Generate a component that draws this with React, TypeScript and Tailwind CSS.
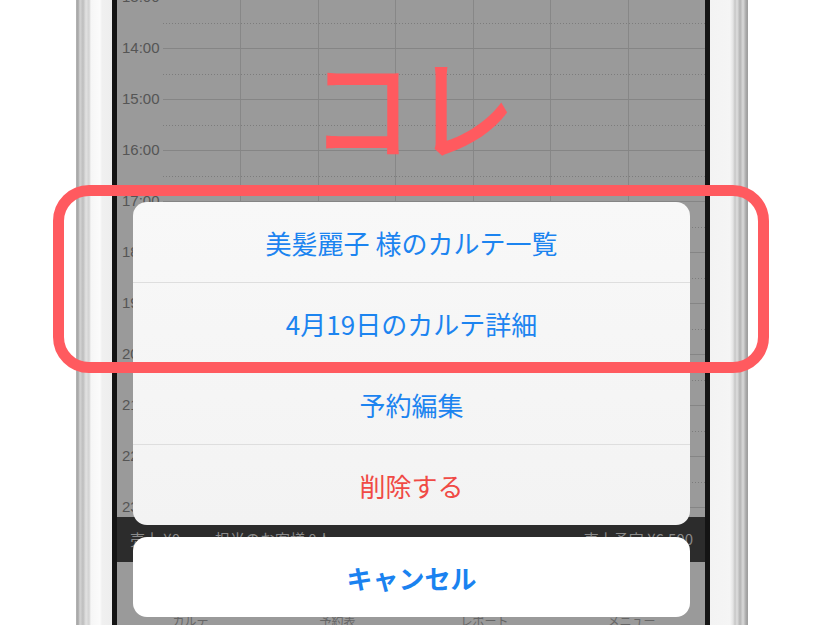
const hours = [13, 14, 15, 16, 17, 18, 19, 20, 21, 22];
const tabs = ["カルテ", "予約表", "レポート", "メニュー"];
const sheetItems = [
  { label: "美髪麗子 様のカルテ一覧", danger: false },
  { label: "4月19日のカルテ詳細", danger: false },
  { label: "予約編集", danger: false },
  { label: "削除する", danger: true },
];

const jp = "font-['Noto_Sans_CJK_JP',sans-serif]";

function HourRow({ hour, short }: { hour: number; short?: boolean }) {
  return (
    <div className={`flex ${short ? "h-[10px]" : "h-[51px]"}`}>
      <div className="flex h-0 w-[46px] items-center pl-[5px] font-['Liberation_Sans',sans-serif] text-[15px] text-[#555]">
        {hour}:00
      </div>
      <div className="grid flex-1 grid-cols-7 border-t border-[#858585]">
        {Array.from({ length: 7 }).map((_, i) => (
          <div key={i} className={i > 0 ? "border-l border-[#878787]" : ""}>
            {!short && (
              <div className="mt-[25px] h-px bg-[linear-gradient(90deg,#7c7c7c_1px,transparent_1px)] bg-[length:3px_1px]" />
            )}
          </div>
        ))}
      </div>
    </div>
  );
}

function Screen() {
  return (
    <div className="flex h-full w-[588px] flex-col overflow-hidden bg-[#9a9a9a]">
      <div className="mt-[-3px]">
        {hours.map((h) => (
          <HourRow key={h} hour={h} />
        ))}
        <HourRow hour={23} short />
      </div>
      <div className={`flex h-[45px] shrink-0 items-center bg-[#2c2c2c] pl-[13px] pr-[12px] text-[15px] text-[#8a8a8a] ${jp}`}>
        <span className="w-[85px]">売上 ¥0</span>
        <span>担当のお客様 0人</span>
        <span className="ml-auto">売上予定 ¥6,500</span>
      </div>
      <div className={`grid flex-1 grid-cols-4 pt-[53px] text-[12px] text-[#666] ${jp}`}>
        {tabs.map((t) => (
          <div key={t} className="text-center leading-none">
            {t}
          </div>
        ))}
      </div>
    </div>
  );
}

export default function App() {
  return (
    <div className="relative h-[625px] w-[830px] overflow-hidden bg-white">
      <div className="flex h-full pl-[76px]">
        <div className="flex h-full w-[672px]">
          <div className="h-full w-[36px] bg-[linear-gradient(90deg,#b4b4b4_0px,#a6a6a6_2px,#d4d4d4_4px,#bdbdbd_7px,#e2e2e2_10px,#d2d2d2_13px,#f6f6f6_15px,#fbfbfb_24px,#f0f0f0_26px,#eeeeee_36px)]" />
          <div className="h-full w-[5px] bg-[#141414]" />
          <Screen />
          <div className="h-full w-[5px] bg-[#141414]" />
          <div className="h-full w-[38px] bg-[linear-gradient(90deg,#f3f3f3_0px,#f5f5f5_20px,#e4e4e4_23px,#c6c6c6_25px,#dedede_27px,#b3b3b3_30px,#d9d9d9_33px,#a9a9a9_36px,#9c9c9c_38px)]" />
        </div>
      </div>

      {/* action sheet */}
      <div className={`absolute left-[133px] top-[202px] flex w-[557px] flex-col gap-[12px] ${jp}`}>
        <div className="overflow-hidden rounded-[14px] bg-[linear-gradient(180deg,#f8f8f8,#f3f3f3)]">
          {sheetItems.map((item, i) => (
            <div
              key={item.label}
              className={`flex items-center justify-center text-[26px] ${
                i === 0 ? "h-[80px]" : "h-[81px] border-t border-[#dedede]"
              } ${item.danger ? "text-[#f04a45]" : "text-[#1c84f0]"}`}
            >
              {item.label}
            </div>
          ))}
        </div>
        <div className="flex h-[80px] items-center justify-center rounded-[14px] bg-white text-[26px] font-bold text-[#1a82f0]">
          キャンセル
        </div>
      </div>

      {/* annotation */}
      <div className="absolute left-[53px] top-[185px] h-[188px] w-[716px] rounded-[36px] border-[11px] border-[#ff5a5f]" />
      <div className={`absolute left-[293px] top-[46px] w-[240px] scale-x-[0.9] text-center text-[114px] font-medium leading-none text-[#ff5a5f] ${jp}`}>
        コレ
      </div>
    </div>
  );
}
